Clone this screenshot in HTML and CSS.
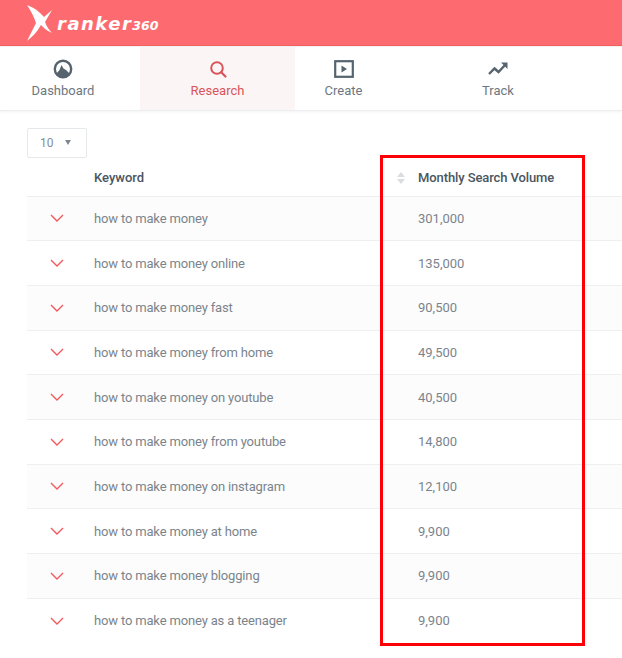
FILE: index.html
```html
<!DOCTYPE html>
<html lang="en">
<head>
<meta charset="utf-8">
<title>Ranker360</title>
<link rel="stylesheet" href="styles.css">
</head>
<body>
<header class="topbar">
  <div class="logo">
    <svg class="logo-x" width="25" height="36" viewBox="0 0 25 36"><path fill="#fff" d="M0 0 C6 2 12 6 17 12 L25 5 L18 17 C20 22 22 25 25 28 C20 26 17 23 14 20 C10 27 5 32 0 36 C3 30 6 24 9 18 C7 12 4 6 0 0Z"/></svg>
    <span class="logo-word">ranker</span><span class="logo-num">360</span>
  </div>
</header>
<nav class="nav">
  <a class="nav-item nav-dash">
    <svg width="20" height="20" viewBox="0 0 20 20"><circle cx="10" cy="10" r="8.200" fill="none" stroke="#56646f" stroke-width="2.400"/><path fill="#56646f" d="M3 15 L6.500 11 L8.500 6 L10.500 9.500 L13 11 L17 15 L13 18 H7Z"/></svg>
    <span>Dashboard</span>
  </a>
  <a class="nav-item nav-research active">
    <svg width="20" height="20" viewBox="0 0 20 20"><circle cx="9" cy="9" r="5.800" fill="none" stroke="#d9545a" stroke-width="2"/><path d="M13.200 13.200 L17.500 17.500" stroke="#d9545a" stroke-width="2.200" stroke-linecap="round"/></svg>
    <span>Research</span>
  </a>
  <a class="nav-item nav-create">
    <svg width="20" height="18" viewBox="0 0 20 18"><rect x="1.200" y="1.200" width="17.600" height="15.600" fill="none" stroke="#56646f" stroke-width="2.200"/><path fill="#56646f" d="M7.500 5.500 L13 9 L7.500 12.500Z"/></svg>
    <span>Create</span>
  </a>
  <a class="nav-item nav-track">
    <svg width="20" height="14" viewBox="0 0 20 14"><path d="M1 12 L6.500 6.500 L10.500 10 L18 2" fill="none" stroke="#56646f" stroke-width="2.400"/><path fill="#56646f" d="M13 0.500 H19.500 V7Z"/></svg>
    <span>Track</span>
  </a>
</nav>
<main class="content">
  <div class="select"><span>10</span><i class="caret"></i></div>
  <div class="table">
    <div class="row head">
      <div class="cell-arrow"></div>
      <div class="cell-key">Keyword</div>
      <div class="cell-sort"><i class="sort-up"></i><i class="sort-down"></i></div>
      <div class="cell-vol">Monthly Search Volume</div>
    </div>
    <div class="row"><div class="cell-arrow"><svg class="chev" width="14" height="8" viewBox="0 0 14 8"><path d="M1 1 L7 7 L13 1"/></svg></div><div class="cell-key">how to make money</div><div class="cell-sort"></div><div class="cell-vol">301,000</div></div>
    <div class="row"><div class="cell-arrow"><svg class="chev" width="14" height="8" viewBox="0 0 14 8"><path d="M1 1 L7 7 L13 1"/></svg></div><div class="cell-key">how to make money online</div><div class="cell-sort"></div><div class="cell-vol">135,000</div></div>
    <div class="row"><div class="cell-arrow"><svg class="chev" width="14" height="8" viewBox="0 0 14 8"><path d="M1 1 L7 7 L13 1"/></svg></div><div class="cell-key">how to make money fast</div><div class="cell-sort"></div><div class="cell-vol">90,500</div></div>
    <div class="row"><div class="cell-arrow"><svg class="chev" width="14" height="8" viewBox="0 0 14 8"><path d="M1 1 L7 7 L13 1"/></svg></div><div class="cell-key">how to make money from home</div><div class="cell-sort"></div><div class="cell-vol">49,500</div></div>
    <div class="row"><div class="cell-arrow"><svg class="chev" width="14" height="8" viewBox="0 0 14 8"><path d="M1 1 L7 7 L13 1"/></svg></div><div class="cell-key">how to make money on youtube</div><div class="cell-sort"></div><div class="cell-vol">40,500</div></div>
    <div class="row"><div class="cell-arrow"><svg class="chev" width="14" height="8" viewBox="0 0 14 8"><path d="M1 1 L7 7 L13 1"/></svg></div><div class="cell-key">how to make money from youtube</div><div class="cell-sort"></div><div class="cell-vol">14,800</div></div>
    <div class="row"><div class="cell-arrow"><svg class="chev" width="14" height="8" viewBox="0 0 14 8"><path d="M1 1 L7 7 L13 1"/></svg></div><div class="cell-key">how to make money on instagram</div><div class="cell-sort"></div><div class="cell-vol">12,100</div></div>
    <div class="row"><div class="cell-arrow"><svg class="chev" width="14" height="8" viewBox="0 0 14 8"><path d="M1 1 L7 7 L13 1"/></svg></div><div class="cell-key">how to make money at home</div><div class="cell-sort"></div><div class="cell-vol">9,900</div></div>
    <div class="row"><div class="cell-arrow"><svg class="chev" width="14" height="8" viewBox="0 0 14 8"><path d="M1 1 L7 7 L13 1"/></svg></div><div class="cell-key">how to make money blogging</div><div class="cell-sort"></div><div class="cell-vol">9,900</div></div>
    <div class="row"><div class="cell-arrow"><svg class="chev" width="14" height="8" viewBox="0 0 14 8"><path d="M1 1 L7 7 L13 1"/></svg></div><div class="cell-key">how to make money as a teenager</div><div class="cell-sort"></div><div class="cell-vol">9,900</div></div>
  </div>
</main>
<div class="highlight"></div>
</body>
</html>
```
FILE: styles.css
```css
* { box-sizing: border-box; }
html, body { margin: 0; padding: 0; }
body {
  position: relative;
  width: 622px;
  height: 658px;
  overflow: hidden;
  background: #fff;
  font-family: Roboto, "Liberation Sans", sans-serif;
  font-size: 13px;
  color: #7b848d;
}
.topbar {
  height: 46px;
  background: #fd6b70;
  border-bottom: 1px solid #f4625f;
  padding: 5px 0 0 27px;
}
.logo { display: flex; align-items: flex-start; color: #fff; font-style: italic; font-family: "DejaVu Sans", sans-serif; font-weight: 700; }
.logo-x { flex: none; }
.logo-word { font-size: 18px; line-height: 22px; margin: 8px 0 0 5px; letter-spacing: 1.500px; }
.logo-num { font-size: 12.500px; line-height: 14px; margin: 14px 0 0 0; }
.nav {
  display: flex;
  height: 65px;
  background: #fff;
  border-top: 1px solid #f1f1f1;
  border-bottom: 1px solid #eceeef;
  box-shadow: 0 1px 3px rgba(0,0,0,0.05);
}
.nav-item {
  display: flex;
  flex-direction: column;
  align-items: center;
  justify-content: flex-start;
  padding-top: 12px;
  font-size: 13px;
  color: #6d7781;
}
.nav-item svg { display: block; height: 20px; }
.nav-item span { margin-top: 3px; line-height: 17px; }
.nav-dash { width: 126px; margin-right: 14px; }
.nav-research { width: 155px; }
.nav-create { width: 97px; }
.nav-track { width: 212px; }
.active { background: #fbf6f5; color: #d9545a; }
.content { padding: 17px 0 0 27px; }
.select {
  display: flex;
  align-items: center;
  width: 60px;
  height: 30px;
  border: 1px solid #e6e9eb;
  border-radius: 2px;
  padding-left: 12px;
  font-size: 12px;
  color: #868d94;
}
.caret {
  margin-left: 11px;
  margin-top: -2px;
  border-left: 3.500px solid transparent;
  border-right: 3.500px solid transparent;
  border-top: 5px solid #80878f;
}
.table { margin-top: 2px; }
.row {
  display: flex;
  align-items: center;
  height: 44.67px;
  border-bottom: 1px solid #edeff0;
}
.row:nth-child(even) { background: #fcfcfc; }
.row:last-child { border-bottom: 0; }
.head {
  height: 36.600px;
  font-weight: 500;
  font-size: 13px;
  color: #4a5561;
}
.cell-arrow { width: 67px; padding-left: 23px; display: flex; }
.cell-key { width: 296px; letter-spacing: -0.16px; }
.head .cell-key { letter-spacing: 0; }
.head .cell-vol { letter-spacing: -0.1px; }
.cell-sort { width: 28px; display: flex; flex-direction: column; align-items: center; gap: 2px; padding-right: 6px; }
.cell-vol { white-space: nowrap; }
.sort-up, .sort-down { display: block; border-left: 4px solid transparent; border-right: 4px solid transparent; }
.sort-up { border-bottom: 5px solid #d9dde1; }
.sort-down { border-top: 5px solid #d9dde1; }
.chev { display: block; fill: none; stroke: #f4585e; stroke-width: 1.400; }
.highlight {
  position: absolute;
  left: 380px;
  top: 155px;
  width: 205px;
  height: 491px;
  border: 3px solid #fb0006;
  pointer-events: none;
}
```
